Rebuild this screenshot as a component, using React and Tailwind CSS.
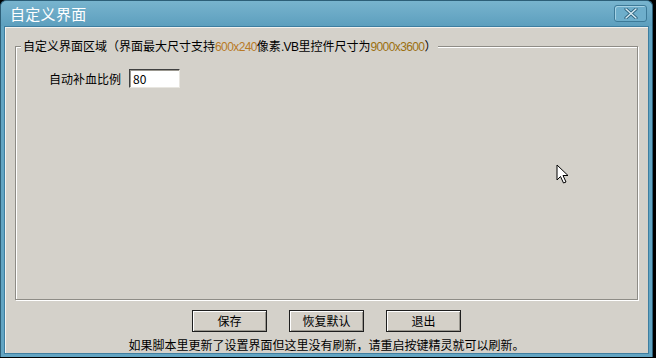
import { useState } from "react";

const FONT = { fontFamily: '"Noto Sans CJK SC", "Noto Sans", sans-serif' };

function CloseButton() {
  return (
    <button
      type="button"
      className="flex h-[17px] w-[33px] items-center justify-center rounded-[3px] border border-[#3d7a98] bg-[#6eaecb] shadow-[inset_1px_1px_0_#a6d2e4]"
    >
      <svg width="14" height="11" viewBox="0 0 14 11">
        <path d="M2 1 L12 10 M12 1 L2 10" stroke="#2f6580" strokeWidth="3.2" strokeLinecap="round" />
        <path d="M2 1 L12 10 M12 1 L2 10" stroke="#d8ecf4" strokeWidth="1.4" strokeLinecap="round" />
      </svg>
    </button>
  );
}

function WinButton({ children }) {
  return (
    <button
      type="button"
      className="h-[22px] w-[75px] border border-[#1e1e1e] bg-[#d4d0c8] text-[12px] text-black shadow-[inset_1px_1px_0_#ffffff,inset_-1px_-1px_0_#9a978f]"
    >
      {children}
    </button>
  );
}

function Cursor() {
  return (
    <svg className="absolute left-[551px] top-[137px]" width="14" height="21" viewBox="0 0 14 21">
      <path
        d="M1 1 L1 16 L4.5 12.5 L7.5 19 L10 18 L7 11.5 L12 11.5 Z"
        fill="#ffffff"
        stroke="#000000"
        strokeWidth="1"
        strokeLinejoin="miter"
      />
    </svg>
  );
}

export default function App() {
  const [ratio, setRatio] = useState("80");

  return (
    <div className="h-[358px] w-[656px] overflow-hidden bg-black" style={FONT}>
      <div className="flex h-[357px] w-[653px] flex-col rounded-t-[6px] border-x border-t border-[#2d5f78] bg-[#62a4c2]">
        <div className="flex h-[25px] shrink-0 items-center justify-between rounded-t-[6px] bg-gradient-to-b from-[#78b4ce] to-[#5d9fbe] pl-[9px] pr-[5px]">
          <span className="text-[15px] leading-none tracking-[0.3px] text-white">自定义界面</span>
          <CloseButton />
        </div>

        <div className="relative mx-[3px] mb-[4px] flex flex-1 flex-col border border-[#3e7ea0] bg-[#d4d1ca] shadow-[inset_1px_1px_0_#f4f2ee]">
          <fieldset className="mx-[10px] mt-[11px] h-[262px] border border-[#8e8c86] px-[5px] shadow-[inset_1px_1px_0_#ffffff,1px_1px_0_#ffffff]">
            <legend className="bg-[#d4d1ca] px-[2px] text-[12px] leading-[16px] text-black">
              自定义界面区域（界面最大尺寸支持
              <span className="font-['Liberation_Sans'] tracking-[-0.6px] text-[#b87a26]">600x240</span>
              像素<span className="font-['Liberation_Sans'] tracking-[-0.6px]">.VB</span>里控件尺寸为
              <span className="font-['Liberation_Sans'] tracking-[-0.6px] text-[#9c7010]">9000x3600</span>）
            </legend>
            <div className="mt-[14px] flex items-center gap-[8px] pl-[28px]">
              <span className="text-[12px] text-black">自动补血比例</span>
              <input
                value={ratio}
                onChange={(e) => setRatio(e.target.value)}
                className="h-[19px] w-[51px] border border-t-[#404040] border-l-[#404040] border-b-[#e8e6e0] border-r-[#e8e6e0] bg-white px-[3px] text-[12px] text-black outline-none shadow-[inset_1px_1px_0_#9a978f]"
              />
            </div>
          </fieldset>

          <div className="mt-[10px] flex justify-center gap-[22px]">
            <WinButton>保存</WinButton>
            <WinButton>恢复默认</WinButton>
            <WinButton>退出</WinButton>
          </div>

          <p className="mt-[5px] text-center text-[12px] leading-[16px] text-black">
            如果脚本里更新了设置界面但这里没有刷新，请重启按键精灵就可以刷新。
          </p>

          <Cursor />
        </div>
      </div>
    </div>
  );
}
